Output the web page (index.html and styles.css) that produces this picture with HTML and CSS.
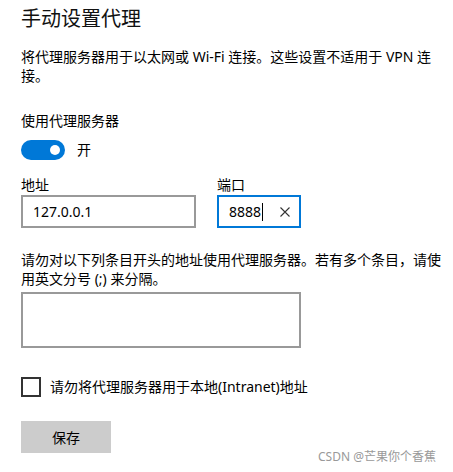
FILE: index.html
```html
<!DOCTYPE html>
<html lang="zh-CN">
<head>
<meta charset="utf-8">
<title>手动设置代理</title>
<link rel="stylesheet" href="styles.css">
</head>
<body>
<main class="page">
  <h1 class="title">手动设置代理</h1>
  <p class="desc">将代理服务器用于以太网或 Wi-Fi 连接。这些设置不适用于 VPN 连接。</p>
  <div class="label label-use">使用代理服务器</div>
  <div class="toggle-row">
    <span class="toggle"><span class="knob"></span></span>
    <span class="toggle-text">开</span>
  </div>
  <div class="fields">
    <div class="field">
      <div class="label">地址</div>
      <div class="input addr">127.0.0.1</div>
    </div>
    <div class="field">
      <div class="label">端口</div>
      <div class="input port focused"><span class="value">8888<span class="caret"></span></span>
        <svg class="clear" width="12" height="12" viewBox="0 0 12 12"><path d="M1.5 1.5 L10.5 10.5 M10.5 1.5 L1.5 10.5" stroke="#333" stroke-width="1.1" fill="none"/></svg>
      </div>
    </div>
  </div>
  <p class="desc desc2">请勿对以下列条目开头的地址使用代理服务器。若有多个条目，请使用英文分号 (;) 来分隔。</p>
  <div class="textarea"></div>
  <label class="check-row">
    <span class="checkbox"></span>
    <span class="check-text">请勿将代理服务器用于本地(Intranet)地址</span>
  </label>
  <div class="button">保存</div>
</main>
<div class="watermark">CSDN @芒果你个香蕉</div>
</body>
</html>
```

FILE: styles.css
```css
html, body {
  margin: 0;
  padding: 0;
  background: #fff;
}
body {
  font-family: "Noto Sans", "Noto Sans CJK SC", sans-serif;
  color: #000;
  font-size: 14px;
  line-height: 19px;
  width: 453px;
  height: 472px;
  position: relative;
  overflow: hidden;
}
.page {
  padding: 4px 0 0 21px;
  width: 421px;
}
.title {
  margin: 0;
  font-size: 20px;
  font-weight: 400;
  line-height: 28px;
  color: #111;
  font-family: "Noto Sans CJK SC", sans-serif;
}
.desc {
  margin: 15px 0 0;
  line-height: 19px;
}
.label {
  line-height: 20px;
}
.label-use {
  margin-top: 26px;
}
.toggle-row {
  display: flex;
  align-items: center;
  gap: 12px;
  margin-top: 9px;
}
.toggle {
  width: 44px;
  height: 20px;
  border-radius: 10px;
  background: #0078d7;
  display: flex;
  align-items: center;
  justify-content: flex-end;
  padding-right: 5px;
  box-sizing: border-box;
}
.knob {
  width: 10px;
  height: 10px;
  border-radius: 50%;
  background: #fff;
}
.toggle-text {
  line-height: 20px;
}
.fields {
  display: flex;
  gap: 21px;
  margin-top: 15px;
}
.input {
  box-sizing: border-box;
  height: 33px;
  border: 2px solid #999;
  display: flex;
  align-items: center;
  padding: 0 10px;
}
.addr {
  width: 175px;
}
.port {
  width: 84px;
  justify-content: space-between;
  padding-right: 8px;
}
.focused {
  border-color: #0078d7;
}
.value {
  display: inline-flex;
  align-items: center;
}
.caret {
  display: inline-block;
  width: 1px;
  height: 18px;
  background: #000;
  margin-left: 1px;
}
.clear {
  display: block;
}
.desc2 {
  margin-top: 22px;
}
.textarea {
  box-sizing: border-box;
  width: 280px;
  height: 56px;
  border: 2px solid #999;
  margin-top: 4px;
}
.check-row {
  display: flex;
  align-items: center;
  gap: 9px;
  margin-top: 29px;
}
.checkbox {
  box-sizing: border-box;
  width: 20px;
  height: 20px;
  border: 2px solid #333;
}
.check-text {
  line-height: 20px;
}
.button {
  margin-top: 24px;
  width: 90px;
  height: 32px;
  background: #ccc;
  display: flex;
  align-items: center;
  justify-content: center;
}
.watermark {
  position: absolute;
  right: 17px;
  bottom: 7px;
  font-size: 12px;
  line-height: 16px;
  color: #999;
}
```
